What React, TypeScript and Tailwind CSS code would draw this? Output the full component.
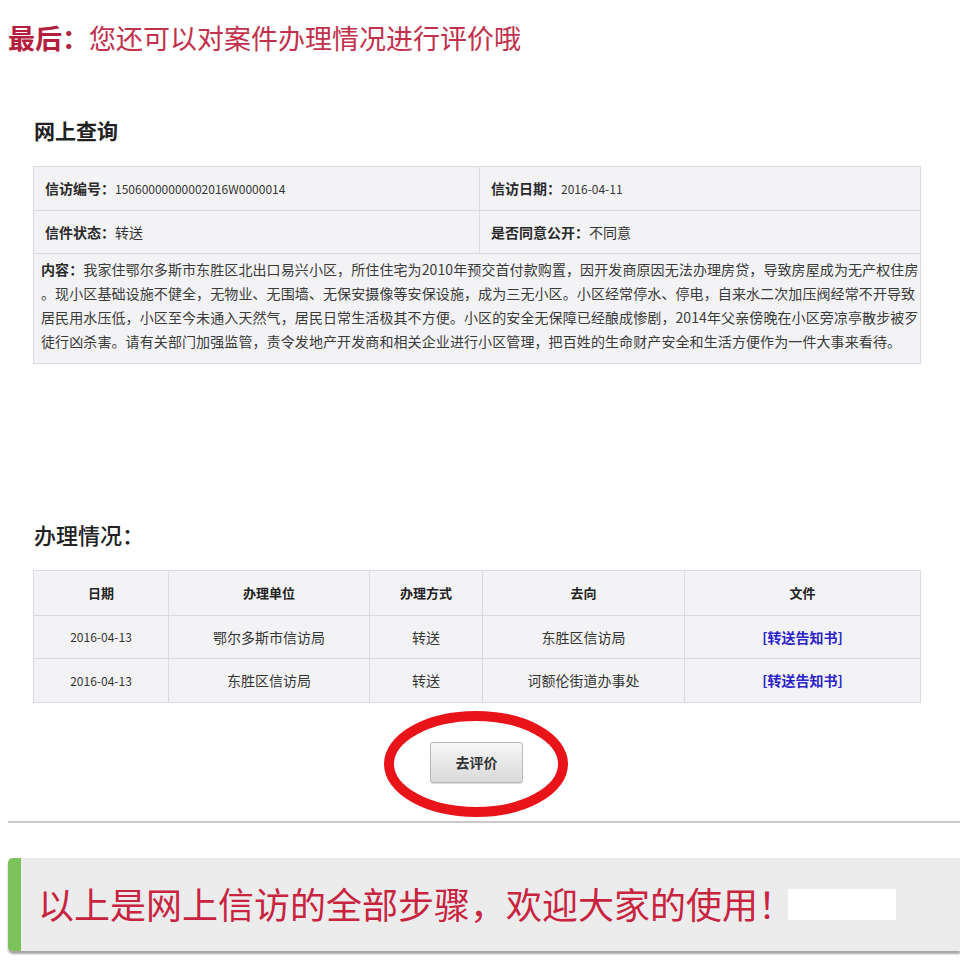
import React from 'react';

const cjk = { fontFamily: '"Noto Sans CJK SC", "Noto Sans", sans-serif' };

const rows = [
  { date: '2016-04-13', unit: '鄂尔多斯市信访局', way: '转送', to: '东胜区信访局' },
  { date: '2016-04-13', unit: '东胜区信访局', way: '转送', to: '诃额伦街道办事处' },
];

function InfoCell({ label, value, small, last }: { label: string; value: string; small?: boolean; last?: boolean }) {
  return (
    <div className={`flex items-center px-[11px] ${last ? '' : 'border-r border-[#d9dbe2]'}`}>
      <span className="text-[14px] font-bold text-[#2a2a2a]">{label}：</span>
      <span className={small ? 'text-[12px] text-[#333]' : 'text-[14px] text-[#333]'}>{value}</span>
    </div>
  );
}

export default function App() {
  return (
    <div className="w-[960px] h-[960px] bg-white overflow-hidden text-[#333]" style={cjk}>
      {/* 顶部提示 */}
      <div className="pt-[19px] pl-[8px] text-[27px] leading-[38px] text-[#c1314c]">
        <span className="font-bold text-[#b3203d]">最后：</span>您还可以对案件办理情况进行评价哦
      </div>

      {/* 网上查询 */}
      <div className="ml-[34px] mt-[55px] text-[21px] font-bold leading-[36px] text-[#222]">网上查询</div>
      <div className="ml-[33px] mt-[18px] w-[888px] border border-[#d9dbe2] bg-[#f3f3f5]">
        <div className="grid grid-cols-[446px_1fr] h-[44px] border-b border-[#d9dbe2]">
          <InfoCell label="信访编号" value="15060000000002016W0000014" small />
          <InfoCell label="信访日期" value="2016-04-11" small last />
        </div>
        <div className="grid grid-cols-[446px_1fr] h-[43px] border-b border-[#d9dbe2]">
          <InfoCell label="信件状态" value="转送" />
          <InfoCell label="是否同意公开" value="不同意" last />
        </div>
        <div className="h-[109px] pl-[7px] pr-[2px] pt-[3px] text-[14px] leading-[24px] tracking-[0.1px] text-[#3a3a3a] whitespace-nowrap">
          <span className="font-bold text-[#2a2a2a]">内容：</span>
          我家住鄂尔多斯市东胜区北出口易兴小区，所住住宅为2010年预交首付款购置，因开发商原因无法办理房贷，导致房屋成为无产权住房
          <br />。现小区基础设施不健全，无物业、无围墙、无保安摄像等安保设施，成为三无小区。小区经常停水、停电，自来水二次加压阀经常不开导致
          <br />居民用水压低，小区至今未通入天然气，居民日常生活极其不方便。小区的安全无保障已经酿成惨剧，2014年父亲傍晚在小区旁凉亭散步被歹
          <br />徒行凶杀害。请有关部门加强监管，责令发地产开发商和相关企业进行小区管理，把百姓的生命财产安全和生活方便作为一件大事来看待。
        </div>
      </div>

      {/* 办理情况 */}
      <div className="ml-[34px] mt-[152px] text-[22px] leading-[36px] font-medium text-[#222]">办理情况：</div>
      <div className="ml-[33px] mt-[18px] w-[888px] border border-[#d9dbe2] bg-[#f3f3f5] text-[14px]">
        <div className="grid grid-cols-[135px_201px_113px_202px_1fr] h-[45px] border-b border-[#d9dbe2] font-bold text-[13px] text-[#222]">
          {['日期', '办理单位', '办理方式', '去向', '文件'].map((h, i) => (
            <div key={h} className={`flex items-center justify-center ${i < 4 ? 'border-r border-[#d9dbe2]' : ''}`}>
              {h}
            </div>
          ))}
        </div>
        {rows.map((r, idx) => (
          <div
            key={idx}
            className={`grid grid-cols-[135px_201px_113px_202px_1fr] h-[43px] ${idx === 0 ? 'border-b border-[#d9dbe2]' : ''}`}
          >
            <div className="flex items-center justify-center border-r border-[#d9dbe2] text-[12px]">{r.date}</div>
            <div className="flex items-center justify-center border-r border-[#d9dbe2]">{r.unit}</div>
            <div className="flex items-center justify-center border-r border-[#d9dbe2]">{r.way}</div>
            <div className="flex items-center justify-center border-r border-[#d9dbe2]">{r.to}</div>
            <div className="flex items-center justify-center font-bold text-[#2b22c9]">[转送告知书]</div>
          </div>
        ))}
      </div>

      {/* 去评价 */}
      <div className="relative mt-[39px] h-[42px] flex justify-center pr-[7px]">
        <button className="w-[93px] h-[41px] rounded-[3px] border border-[#b8b8b8] bg-gradient-to-b from-[#f7f7f7] to-[#d9d9d9] text-[14px] font-bold text-[#333] shadow-[0_1px_1px_rgba(0,0,0,0.15)]">
          去评价
        </button>
        <svg className="absolute left-[380px] top-[-33px]" width="192" height="112" viewBox="0 0 192 112">
          <ellipse cx="96" cy="55" rx="87" ry="48" fill="none" stroke="#e8141a" strokeWidth="10" />
        </svg>
      </div>

      <div className="ml-[8px] mt-[37px] h-[2px] bg-[#c9c9c9]" />

      {/* 底部横幅 */}
      <div className="ml-[8px] mt-[35px] h-[93px] flex items-center rounded-l-[5px] bg-[#ececec] border-l-[13px] border-[#7cc35c] shadow-[0_3px_2px_rgba(0,0,0,0.35)]">
        <span className="ml-[17px] mb-[3px] text-[36px] leading-none text-[#c8233f]">以上是网上信访的全部步骤，欢迎大家的使用！</span>
        <span className="-ml-[6px] inline-block w-[108px] h-[31px] bg-white" />
      </div>
    </div>
  );
}
